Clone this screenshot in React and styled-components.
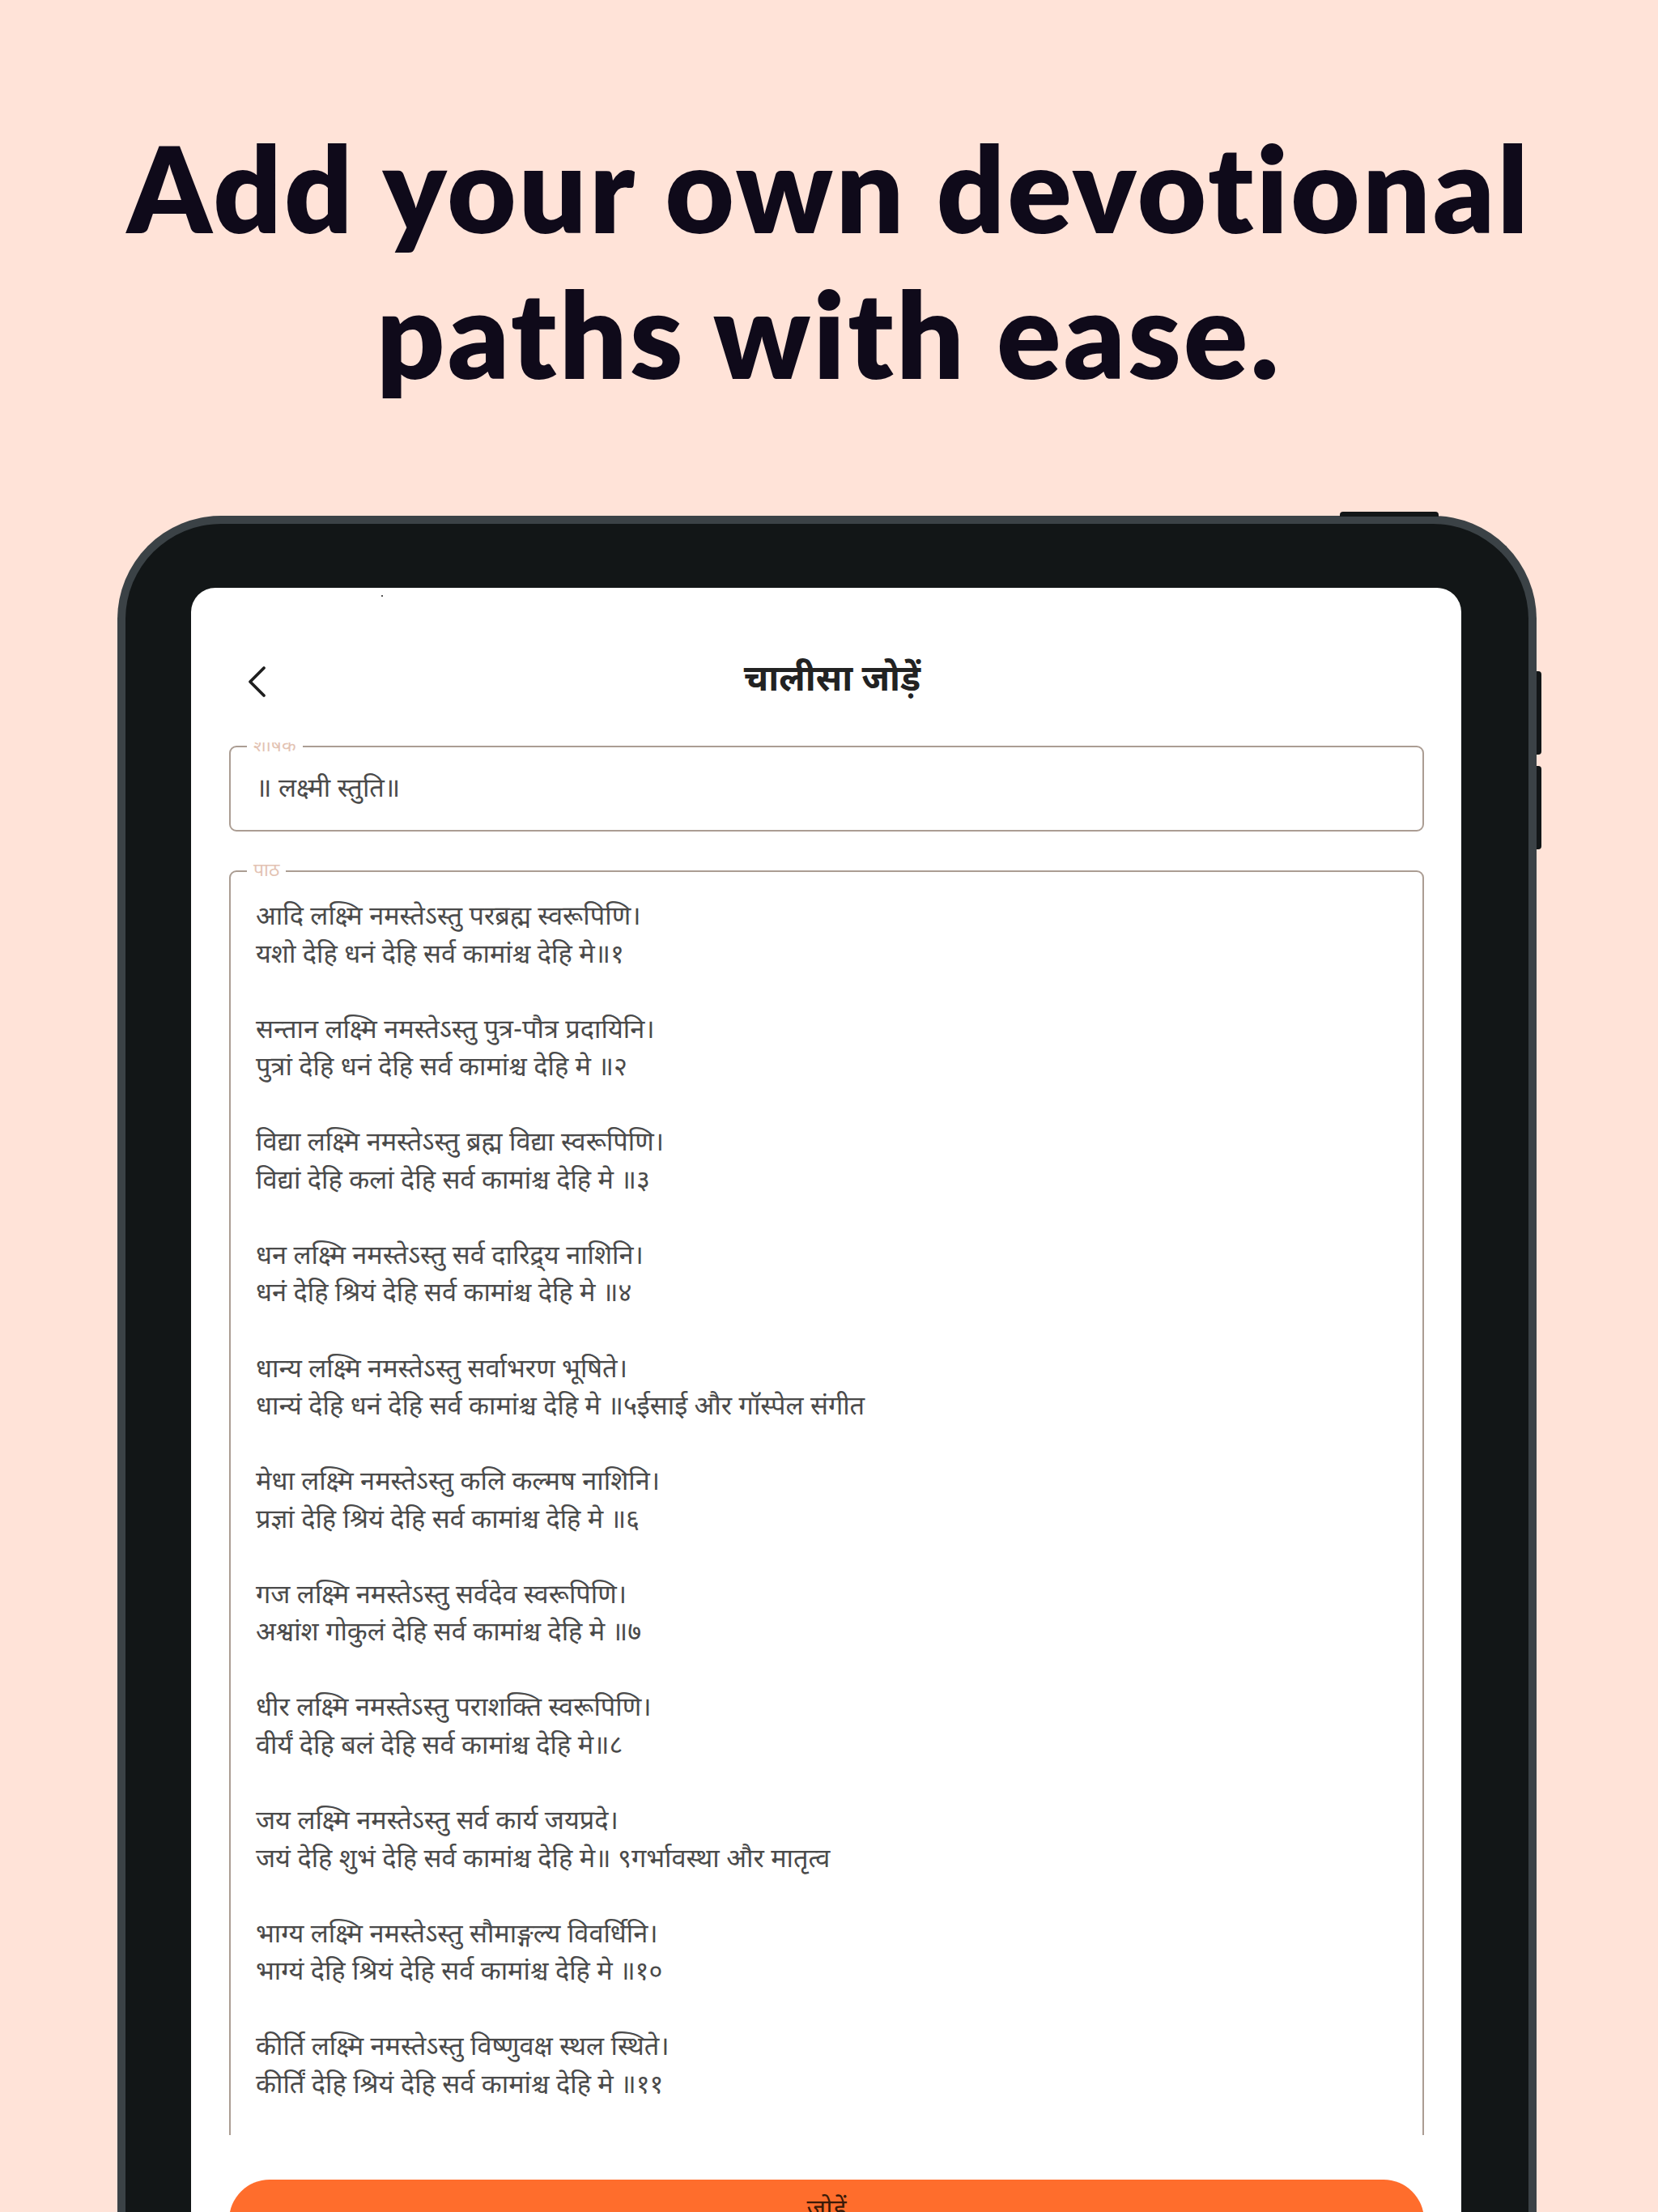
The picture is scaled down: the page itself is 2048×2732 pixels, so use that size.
import React from 'react';
import styled, { createGlobalStyle } from 'styled-components';

const GlobalStyle = createGlobalStyle`
  html, body {
    margin: 0;
    padding: 0;
    background: #ffe3d8;
  }
`;

const deva = `"Noto Sans Devanagari", "Noto Sans", "Lohit Devanagari", sans-serif`;

const Page = styled.div`
  width: 2048px;
  height: 2732px;
  overflow: hidden;
  background: #ffe3d8;
  display: flex;
  flex-direction: column;
`;

const Headline = styled.h1`
  margin: 0;
  padding-top: 141px;
  font-family: Lato, "Open Sans", sans-serif;
  font-weight: 800;
  font-size: 147px;
  line-height: 180px;
  color: #0f0a1a;
  text-align: center;
  letter-spacing: 3.3px;
`;

const Device = styled.div`
  position: relative;
  margin: 136px 0 0 145px;
  width: 1753px;
  height: 2200px;
  box-sizing: border-box;
  border: 10px solid #3b4246;
  border-bottom: none;
  border-radius: 128px 128px 0 0;
  background: #121617;
  padding: 79px 83px 0 81px;
  display: flex;
`;

// hardware buttons sit on the frame edge
const TopKey = styled.span`
  position: absolute;
  top: -15px;
  left: 1500px;
  width: 122px;
  height: 6px;
  background: #121617;
  border-radius: 4px 4px 0 0;
`;

const SideKey = styled.span`
  position: absolute;
  right: -16px;
  top: ${p => p.$top}px;
  width: 6px;
  height: 103px;
  background: #121617;
  border-radius: 0 4px 4px 0;
`;

const Screen = styled.div`
  position: relative;
  flex: 1;
  background: #ffffff;
  border-radius: 30px 30px 0 0;
  display: flex;
  flex-direction: column;
`;

const StatusDot = styled.span`
  position: absolute;
  top: 9px;
  left: 235px;
  width: 2px;
  height: 2px;
  background: #555;
`;

const Header = styled.div`
  height: 80px;
  padding: 76px 0 35px;
  display: flex;
  align-items: center;
  position: relative;
`;

const BackButton = styled.button`
  margin-left: 67px;
  width: 30px;
  height: 44px;
  padding: 0;
  border: none;
  background: none;
  display: flex;
  align-items: center;
  justify-content: center;
  cursor: pointer;
`;

const Title = styled.div`
  flex: 1;
  margin-right: 82px;
  text-align: center;
  font-family: ${deva};
  font-weight: 700;
  font-size: 44px;
  color: #222222;
`;

const Form = styled.div`
  height: 1716px;
  overflow: hidden;
  padding: 4px 46px 0 47px;
  display: flex;
  flex-direction: column;
  gap: 48px;
`;

const Field = styled.div`
  position: relative;
  flex: none;
  height: ${p => (p.$tall ? '1700px' : '106px')};
  box-sizing: border-box;
  border: 2px solid #ab9d93;
  border-radius: 9px;
  padding: ${p => (p.$tall ? '34px 31px 0' : '5px 31px 0')};
  display: flex;
  align-items: ${p => (p.$tall ? 'flex-start' : 'center')};
`;

const Label = styled.span`
  position: absolute;
  top: -16px;
  left: 20px;
  padding: 0 8px;
  background: #ffffff;
  font-family: ${deva};
  font-size: 23px;
  line-height: 30px;
  color: #e3c3b3;
`;

const Value = styled.div`
  font-family: ${deva};
  font-size: 32.5px;
  line-height: 46.55px;
  color: #4a4a4a;
  white-space: pre-wrap;
`;

const SaveButton = styled.button`
  margin: 55px 46px 0 47px;
  height: 100px;
  border: none;
  border-radius: 50px;
  background: #ff6d2c;
  font-family: ${deva};
  font-size: 32px;
  color: #3a1a08;
  display: flex;
  justify-content: center;
  padding-top: 18px;
`;

const Chevron = () => (
  <svg width="26" height="40" viewBox="0 0 26 40" fill="none">
    <polyline points="21,3 4,20 21,37" stroke="#1e1e1e" strokeWidth="3.8" strokeLinecap="round" strokeLinejoin="round" />
  </svg>
);

const path = `आदि लक्ष्मि नमस्तेऽस्तु परब्रह्म स्वरूपिणि।
यशो देहि धनं देहि सर्व कामांश्च देहि मे॥१

सन्तान लक्ष्मि नमस्तेऽस्तु पुत्र-पौत्र प्रदायिनि।
पुत्रां देहि धनं देहि सर्व कामांश्च देहि मे ॥२

विद्या लक्ष्मि नमस्तेऽस्तु ब्रह्म विद्या स्वरूपिणि।
विद्यां देहि कलां देहि सर्व कामांश्च देहि मे ॥३

धन लक्ष्मि नमस्तेऽस्तु सर्व दारिद्र्य नाशिनि।
धनं देहि श्रियं देहि सर्व कामांश्च देहि मे ॥४

धान्य लक्ष्मि नमस्तेऽस्तु सर्वाभरण भूषिते।
धान्यं देहि धनं देहि सर्व कामांश्च देहि मे ॥५ईसाई और गॉस्पेल संगीत

मेधा लक्ष्मि नमस्तेऽस्तु कलि कल्मष नाशिनि।
प्रज्ञां देहि श्रियं देहि सर्व कामांश्च देहि मे ॥६

गज लक्ष्मि नमस्तेऽस्तु सर्वदेव स्वरूपिणि।
अश्वांश गोकुलं देहि सर्व कामांश्च देहि मे ॥७

धीर लक्ष्मि नमस्तेऽस्तु पराशक्ति स्वरूपिणि।
वीर्यं देहि बलं देहि सर्व कामांश्च देहि मे॥८

जय लक्ष्मि नमस्तेऽस्तु सर्व कार्य जयप्रदे।
जयं देहि शुभं देहि सर्व कामांश्च देहि मे॥ ९गर्भावस्था और मातृत्व

भाग्य लक्ष्मि नमस्तेऽस्तु सौमाङ्गल्य विवर्धिनि।
भाग्यं देहि श्रियं देहि सर्व कामांश्च देहि मे ॥१०

कीर्ति लक्ष्मि नमस्तेऽस्तु विष्णुवक्ष स्थल स्थिते।
कीर्तिं देहि श्रियं देहि सर्व कामांश्च देहि मे ॥११`;

export default function App() {
  return (
    <Page>
      <GlobalStyle />
      <Headline>
        Add your own devotional
        <br />
        paths with ease.
      </Headline>
      <Device>
        <TopKey />
        <SideKey $top={182} />
        <SideKey $top={299} />
        <Screen>
          <StatusDot />
          <Header>
            <BackButton aria-label="back">
              <Chevron />
            </BackButton>
            <Title>चालीसा जोड़ें</Title>
          </Header>
          <Form>
            <Field>
              <Label>शीर्षक</Label>
              <Value>॥ लक्ष्मी स्तुति॥</Value>
            </Field>
            <Field $tall>
              <Label>पाठ</Label>
              <Value>{path}</Value>
            </Field>
          </Form>
          <SaveButton>जोड़ें</SaveButton>
        </Screen>
      </Device>
    </Page>
  );
}
